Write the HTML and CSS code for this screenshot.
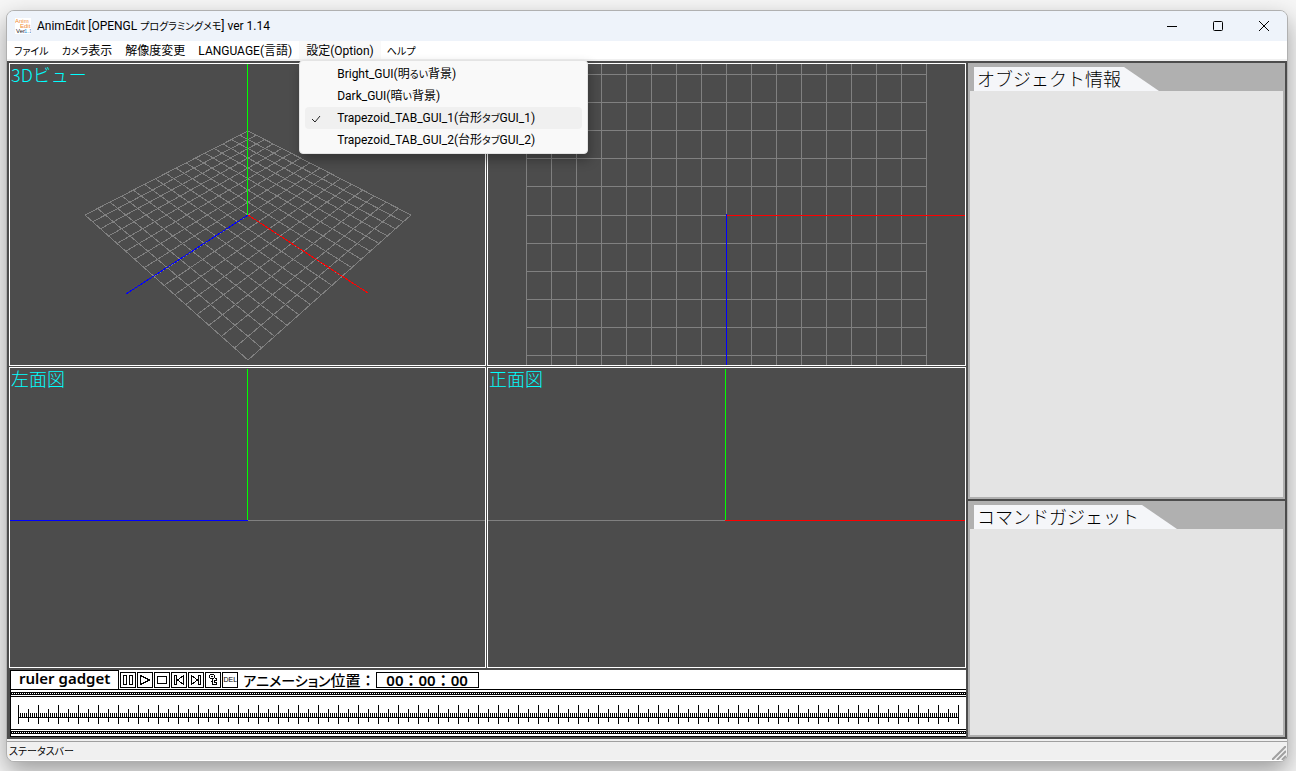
FILE: index.html
```html
<!DOCTYPE html>
<html lang="ja">
<head>
<meta charset="utf-8">
<title>AnimEdit</title>
<link rel="stylesheet" href="styles.css">
</head>
<body>
<div class="window">
  <header class="titlebar">
    <svg class="app-icon" width="16" height="16" viewBox="0 0 16 16" aria-hidden="true">
      <rect width="16" height="16" fill="#fff"/>
      <text x="0" y="5" class="logo-orange">Anim</text>
      <text x="5" y="10" class="logo-orange">Edit</text>
      <text x="1" y="15" class="logo-dark">Ver</text>
      <text x="9" y="15" class="logo-blue">1.1</text>
    </svg>
    <h1 class="title">AnimEdit [OPENGL <span class="kana">プログラミングメモ</span>] ver 1.14</h1>
    <div class="caption-buttons">
      <button type="button" aria-label="Minimize"><svg width="12" height="12"><path d="M1 6.5h10"/></svg></button>
      <button type="button" aria-label="Maximize"><svg width="12" height="12"><rect x="1.5" y="1.5" width="9" height="9" rx="1"/></svg></button>
      <button type="button" aria-label="Close"><svg width="12" height="12"><path d="M1 1l10 10M11 1L1 11"/></svg></button>
    </div>
  </header>

  <nav class="menubar">
    <button type="button"><span class="kana">ファイル</span></button>
    <button type="button"><span class="kana">カメラ</span>表示</button>
    <button type="button">解像度変更</button>
    <button type="button">LANGUAGE(言語)</button>
    <div class="menu-host">
      <button type="button" class="open" aria-expanded="true">設定(Option)</button>
      <div class="popup" role="menu">
        <button type="button" role="menuitemradio">Bright_GUI(明<span class="kana">るい</span>背景)</button>
        <button type="button" role="menuitemradio">Dark_GUI(暗<span class="kana">い</span>背景)</button>
        <button type="button" role="menuitemradio" aria-checked="true" class="checked"><svg class="check" width="10" height="8"><path d="M1 4l3 3 5-6"/></svg>Trapezoid_TAB_GUI_1(台形<span class="kana">タブ</span>GUI_1)</button>
        <button type="button" role="menuitemradio">Trapezoid_TAB_GUI_2(台形<span class="kana">タブ</span>GUI_2)</button>
      </div>
    </div>
    <button type="button"><span class="kana">ヘルプ</span></button>
  </nav>

  <main class="workspace">
    <section class="editor">
      <div class="views">
        <div class="view">
          <svg class="scene" viewBox="10 64 475 301" preserveAspectRatio="xMidYMid slice">
            <g id="floor" class="grid"></g>
            <path class="axis-y" d="M247.5 64V215"/>
            <path class="axis-x" d="M248 215L368 293"/>
            <path class="axis-z" d="M248 215L126 294"/>
          </svg>
          <span class="view-label">3Dビュー</span>
        </div>
        <div class="view">
          <svg class="scene" viewBox="488 64 477 301" preserveAspectRatio="xMidYMid slice">
            <g id="plan" class="grid"></g>
            <path class="axis-x" d="M727 215.5H966"/>
            <path class="axis-z" d="M726.5 214V366"/>
          </svg>
        </div>
        <div class="view">
          <svg class="scene" viewBox="10 368 475 299" preserveAspectRatio="xMidYMid slice">
            <path class="grid" d="M248 520.5H486"/>
            <path class="axis-y" d="M247.5 369V520"/>
            <path class="axis-z" d="M10 520.5H248"/>
          </svg>
          <span class="view-label">左面図</span>
        </div>
        <div class="view">
          <svg class="scene" viewBox="488 368 477 299" preserveAspectRatio="xMidYMid slice">
            <path class="grid" d="M488 520.5H725"/>
            <path class="axis-y" d="M725.5 369V520"/>
            <path class="axis-x" d="M725 520.5H966"/>
          </svg>
          <span class="view-label">正面図</span>
        </div>
      </div>

      <div class="ruler">
        <div class="ruler-head">
          <h2 class="ruler-title">ruler gadget</h2>
          <div class="transport">
            <button type="button" aria-label="Pause"><svg width="14" height="14"><path d="M2.5 2.5h3v9h-3zM8.5 2.5h3v9h-3z"/></svg></button>
            <button type="button" aria-label="Play"><svg width="14" height="14"><path d="M2.5 2.5v9l9-4.5z"/></svg></button>
            <button type="button" aria-label="Stop"><svg width="14" height="14"><path d="M2.5 3.5h9v7h-9z"/></svg></button>
            <button type="button" aria-label="Previous"><svg width="14" height="14"><path d="M2.5 2.5h2v9h-2zM11.5 2.5v9l-6-4.5z"/></svg></button>
            <button type="button" aria-label="Next"><svg width="14" height="14"><path d="M9.5 2.5h2v9h-2zM2.5 2.5v9l6-4.5z"/></svg></button>
            <button type="button" aria-label="Key"><svg width="14" height="14"><path d="M4.500 1.500h3l1 1v2l-1 1h-3l-1-1v-2zM5 3.500h2M6.500 5.500v6h4v-2h-2v-2h2v-2h-2M5 7.500v1"/></svg></button>
            <button type="button" class="del">DEL</button>
          </div>
          <label class="time-label" for="time"><span class="kana">アニメーション</span>位置：</label>
          <input class="time" id="time" type="text" value="00：00：00" readonly>
        </div>
        <div class="rail rail-top"></div>
        <svg class="scale" height="32" aria-label="Timeline">
          <defs>
            <pattern id="ticks" width="20" height="32" patternUnits="userSpaceOnUse">
              <path d="M0 20h20v1H0zM0 8h1v19H0zM10 12h1v13h-1zM2 16h1v4H2zM4 16h1v4H4zM6 16h1v4H6zM8 16h1v4H8zM12 16h1v4h-1zM14 16h1v4h-1zM16 16h1v4h-1zM18 16h1v4h-1z"/>
            </pattern>
          </defs>
          <rect width="100%" height="32" fill="url(#ticks)"/>
        </svg>
        <div class="rail rail-bottom"></div>
      </div>
    </section>

    <aside class="side">
      <section class="panel">
        <h2 class="tab">オブジェクト情報</h2>
        <div class="panel-body"></div>
      </section>
      <section class="panel">
        <h2 class="tab">コマンドガジェット</h2>
        <div class="panel-body"></div>
      </section>
    </aside>
  </main>

  <footer class="statusbar">
    <span class="kana">ステータスバー</span>
    <svg class="grip" width="14" height="14"><path d="M0 14L14 0M5 14l9-9M10 14l4-4"/></svg>
  </footer>
</div>
<script src="scene.js"></script>
</body>
</html>
```

FILE: styles.css
```css
* { box-sizing: border-box; }

body {
  margin: 0;
  height: 100vh;
  padding: 10px 8px 9px 6px;
  overflow: hidden;
  background: #f6f6f6;
  color: #000;
  font: 12px/18px Roboto, "Noto Sans CJK JP", sans-serif;
}

button, input { font: inherit; color: inherit; }
button { border: 0; padding: 0; background: none; white-space: nowrap; }
h1, h2 { margin: 0; font-weight: 400; }

.kana {
  font-family: "Noto Sans CJK JP", sans-serif;
  font-size: 10px;
  font-feature-settings: "palt";
}

.window {
  display: flex;
  flex-direction: column;
  height: 100%;
  border: 1px solid #b0b0b0;
  border-radius: 8px;
  overflow: hidden;
  background: #f0f0f0;
  box-shadow: 0 10px 24px rgba(0, 0, 0, 0.36);
}

.titlebar {
  display: flex;
  align-items: center;
  height: 30px;
  padding-left: 8px;
  background: #eef3fa;
}
.title { flex: 1; margin-left: 6px; font-size: 12px; }
.title .kana { font-size: 10px; }
.logo-orange, .logo-dark, .logo-blue { font: 6px "Liberation Sans", sans-serif; }
.logo-orange { fill: #f08a30; }
.logo-dark { fill: #222; }
.logo-blue { fill: #3a9ad8; }

.caption-buttons { display: flex; }
.caption-buttons button { display: grid; place-items: center; width: 46px; height: 30px; }
.caption-buttons svg { fill: none; stroke: #000; }

.menubar {
  display: flex;
  height: 20px;
  border-bottom: 2px solid #f0f0f0;
  background: #fff;
}
.menubar > button, .open { height: 18px; padding: 1px 7px 0 6px; }
.menubar > button:first-child { padding-left: 7px; }
.menu-host { position: relative; }
.open { padding-left: 7px; background: #f9f9f9; }

.popup {
  position: absolute;
  z-index: 2;
  top: 19px;
  left: 0;
  display: flex;
  flex-direction: column;
  width: 289px;
  padding: 2px 5px;
  border: 1px solid #e4e4e4;
  border-radius: 4px;
  background: #f9f9f9;
  box-shadow: 2px 6px 12px rgba(0, 0, 0, 0.3);
}
.popup button {
  position: relative;
  height: 22px;
  padding-left: 32px;
  border-radius: 4px;
  text-align: left;
}
.popup .checked { background: #f0f0f0; }
.check { position: absolute; left: 6px; top: 8px; fill: none; stroke: #222; }

.workspace {
  flex: 1;
  min-height: 0;
  display: grid;
  grid-template-columns: 957fr 317fr;
  gap: 2px;
  padding: 2px;
  background: #4c4c4c;
}

.editor { display: flex; flex-direction: column; gap: 2px; min-width: 0; }

.views {
  flex: 1;
  min-height: 0;
  display: grid;
  grid-template-columns: 477fr 479fr;
  grid-template-rows: 303fr 301fr;
  gap: 1px;
}
.view { position: relative; min-height: 0; border: 1px solid #fff; }
.scene { display: block; width: 100%; height: 100%; fill: none; shape-rendering: crispEdges; }
.grid { stroke: #808080; }
.axis-x { stroke: #f00; }
.axis-y { stroke: #0f0; }
.axis-z { stroke: #00f; }
.view-label {
  position: absolute;
  top: 0;
  left: 1px;
  color: #0ff;
  font: 300 18px/20px "Noto Sans CJK JP", sans-serif;
}

.ruler { margin-left: 1px; background: #fff; border-left: 1px solid #000; }
.ruler-head { display: flex; align-items: center; height: 19px; }
.ruler-title {
  align-self: stretch;
  padding: 0 8px;
  border: solid #000;
  border-width: 1px 1px 0 0;
  font: 600 15px/15px "Noto Sans", sans-serif;
}
.transport { display: flex; gap: 1px; margin-left: 1px; }
.transport button { width: 16px; height: 16px; border: 1px solid #000; overflow: hidden; }
.transport svg { display: block; fill: none; stroke: #000; shape-rendering: crispEdges; }
.transport .del { font: 7px/14px "Liberation Sans", sans-serif; }
.time-label { margin-left: 5px; font: 500 15px/18px "Noto Sans CJK JP", sans-serif; }
.time-label .kana { font-size: 14px; }
.time {
  width: 103px;
  height: 16px;
  padding: 0;
  border: 1px solid #000;
  background: #fff;
  text-align: center;
  font: 600 15px/14px "Noto Sans", "Noto Sans CJK JP", sans-serif;
}

.rail {
  display: flex;
  flex-direction: column;
  justify-content: space-between;
  height: 8px;
  border: solid #000;
  border-width: 1px 0;
  background: repeating-linear-gradient(90deg, #000 0 1px, #fff 1px 2px) content-box;
}
.rail::before, .rail::after { content: ""; flex: none; height: 1px; background: #000; }
.rail-top { padding: 2px 0 1px; }
.rail-bottom { padding: 1px 0 2px; }
.scale { display: block; width: calc(100% - 14px); margin-left: 7px; shape-rendering: crispEdges; }

.side { display: grid; grid-template-rows: 436fr 236fr; gap: 2px; }
.panel {
  display: flex;
  flex-direction: column;
  align-items: flex-start;
  padding: 4px 2px 2px;
  background: #b0b0b0;
}
.tab {
  height: 24px;
  margin-left: 4px;
  padding: 0 38px 0 3px;
  background: #f5f6f9;
  clip-path: polygon(0 0, calc(100% - 35px) 0, 100% 100%, 0 100%);
  font: 300 18px/22px "Noto Sans CJK JP", sans-serif;
}
.panel-body { flex: 1; align-self: stretch; background: #e4e4e4; }

.statusbar {
  position: relative;
  height: 20px;
  margin-top: 2px;
  padding-left: 2px;
  border-top: 1px solid #a0a0a0;
  border-bottom: 1px solid #fff;
}
.grip { position: absolute; right: 1px; bottom: 0; stroke: #a0a0a0; stroke-width: 2; }
```

FILE: scene.js
```js
// Perspective floor: 16 x 16 cells seen along the diagonal.
const half = 8;
function project(x, z) {
  const u = (x + z) / 16;
  const v = (x - z) / 16;
  const w = 1 - 0.2664 * u;
  return (248 + 163 * v / w) + ' ' + (215 + 106.4 * u / w);
}
function addPath(id, d) {
  const path = document.createElementNS('http://www.w3.org/2000/svg', 'path');
  path.setAttribute('d', d);
  document.getElementById(id).appendChild(path);
}
for (let i = -half; i <= half; i++) {
  addPath('floor', `M${project(i, -half)}L${project(i, half)}M${project(-half, i)}L${project(half, i)}`);
  addPath('plan', `M${726.5 + i * 25} 64V366`);
}
for (const y of [74, 102, 130, 158, 186, 215, 243, 271, 299, 327, 355]) {
  addPath('plan', `M526 ${y + 0.5}H926`);
}
```
